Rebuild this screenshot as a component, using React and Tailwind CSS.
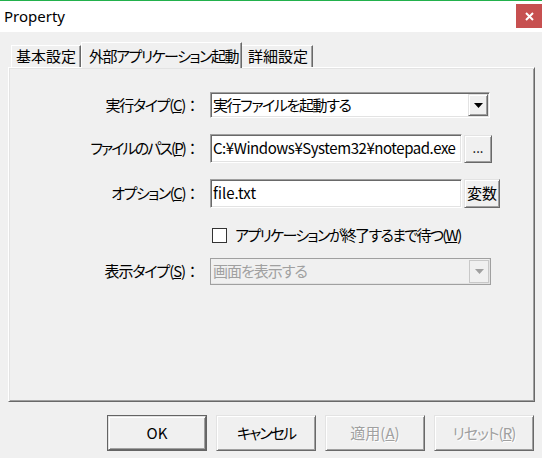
const raised =
  "border border-t-[#e3e3e3] border-l-[#e3e3e3] border-r-[#696969] border-b-[#696969] shadow-[inset_1px_1px_0_#ffffff,inset_-1px_-1px_0_#a0a0a0] bg-[#f0f0f0]";
const sunken =
  "border border-t-[#a0a0a0] border-l-[#a0a0a0] border-r-white border-b-white shadow-[inset_1px_1px_0_#696969,inset_-1px_-1px_0_#e3e3e3] bg-white";

const Label = ({ children, tight }) => (
  <div className="w-[190px] flex justify-end items-center text-[15px] text-black whitespace-nowrap">
    <span className={tight}>{children}</span>
    <span className="w-[15px] text-center [font-feature-settings:normal]">：</span>
  </div>
);

const Triangle = ({ color }) => (
  <svg width="9" height="5" viewBox="0 0 9 5">
    <polygon points="0,0 9,0 4.5,5" fill={color} />
  </svg>
);

const BottomButton = ({ children, primary, disabled, tight }) => (
  <div
    className={`w-[100px] h-[36px] ${
      primary ? "border border-[#646464]" : ""
    } flex`}
  >
    <div
      className={`flex-1 flex items-center justify-center text-[15px] whitespace-nowrap ${tight || ""} ${raised} ${
        disabled ? "text-[#a0a0a0] [text-shadow:1px_1px_0_#ffffff]" : "text-black"
      }`}
    >
      {children}
    </div>
  </div>
);

export default function App() {
  return (
    <div className="w-[542px] h-[458px] overflow-hidden bg-[#f0f0f0] font-['Noto_Sans_CJK_JP',sans-serif] [font-feature-settings:'palt'] text-black">
      {/* Title bar */}
      <div className="h-[32px] bg-white border-t border-[#22b14c] flex justify-between">
        <div className="pl-[4px] pt-[4px] text-[15px] font-['Noto_Sans',sans-serif]">
          Property
        </div>
        <div className="mt-[3px] w-[26px] h-[24px] bg-[#c75050] flex items-center justify-center">
          <svg width="9" height="9" viewBox="0 0 9 9">
            <path d="M1 1 L8 8 M8 1 L1 8" stroke="#fff" strokeWidth="2" />
          </svg>
        </div>
      </div>

      {/* Tabs */}
      <div className="px-[8px] pt-[10px]">
        <div className="flex items-end h-[25px] pl-[3px] relative z-10">
          <div className="w-[70px] h-[22px] border-l border-t border-white border-r border-r-[#696969] shadow-[inset_-1px_0_0_#a0a0a0] flex items-center pl-[4px] text-[15px] whitespace-nowrap">
            基本設定
          </div>
          <div className="w-[161px] h-[26px] -mb-[1px] bg-[#f0f0f0] border-l border-t border-white border-r border-r-[#696969] shadow-[inset_-1px_0_0_#a0a0a0] flex items-start pt-[2px] pl-[7px] text-[15px] tracking-[-1.5px] whitespace-nowrap">
            外部アプリケーション起動
          </div>
          <div className="w-[71px] h-[22px] border-t border-white border-r border-r-[#696969] shadow-[inset_-1px_0_0_#a0a0a0] flex items-center pl-[6px] text-[15px] whitespace-nowrap">
            詳細設定
          </div>
        </div>

        {/* Panel */}
        <div className="w-[527px] h-[335px] border border-t-white border-l-white border-r-[#696969] border-b-[#696969] shadow-[inset_1px_1px_0_#e3e3e3,inset_-1px_-1px_0_#a0a0a0] pl-[1px] pt-[24px]">
          {/* Row 1 */}
          <div className="flex items-center h-[26px]">
            <Label tight="tracking-[-1.3px]">
              実行タイプ(<span className="underline">C</span>)
            </Label>
            <div className={`ml-[10px] w-[280px] h-[26px] ${sunken} flex items-center justify-between pl-[2px] pr-[1px]`}>
              <span className="text-[15px] tracking-[-1.4px]">実行ファイルを起動する</span>
              <div className={`w-[20px] h-[22px] ${raised} flex items-center justify-center`}>
                <Triangle color="#000" />
              </div>
            </div>
          </div>

          {/* Row 2 */}
          <div className="flex items-center h-[29px] mt-[16px]">
            <Label tight="tracking-[-1.9px]">
              ファイルのパス(<span className="underline">P</span>)
            </Label>
            <div className={`ml-[10px] w-[252px] h-[29px] ${sunken} flex items-center pl-[2px] text-[15px] tracking-[-0.45px] overflow-hidden whitespace-nowrap`}>
              C:¥Windows¥System32¥notepad.exe
            </div>
            <div className={`ml-[2px] w-[28px] h-[28px] ${raised} flex items-center justify-center text-[13px] pb-[2px]`}>
              ...
            </div>
          </div>

          {/* Row 3 */}
          <div className="flex items-center h-[29px] mt-[16px]">
            <Label tight="tracking-[-1.5px]">
              オプション(<span className="underline">C</span>)
            </Label>
            <div className={`ml-[10px] w-[252px] h-[29px] ${sunken} flex items-center pl-[2px] text-[15px]`}>
              file.txt
            </div>
            <div className={`ml-[2px] w-[36px] h-[29px] ${raised} flex items-center justify-center text-[15px]`}>
              変数
            </div>
          </div>

          {/* Row 4 */}
          <div className="flex items-center h-[15px] mt-[20px]">
            <div className="ml-[202px] w-[15px] h-[15px] bg-white border border-[#333]" />
            <span className="ml-[8px] text-[15px] tracking-[-1.65px] whitespace-nowrap">
              アプリケーションが終了するまで待つ(<span className="underline">W</span>)
            </span>
          </div>

          {/* Row 5 */}
          <div className="flex items-center h-[27px] mt-[15px]">
            <Label tight="tracking-[-1.1px]">
              表示タイプ(<span className="underline">S</span>)
            </Label>
            <div className="ml-[10px] w-[281px] h-[27px] border border-[#a0a0a0] shadow-[inset_-1px_-1px_0_#e3e3e3] bg-[#f0f0f0] flex items-center justify-between pl-[2px] pr-[1px]">
              <span className="text-[15px] text-[#a0a0a0] tracking-[-1px]">画面を表示する</span>
              <div className="w-[20px] h-[23px] border border-[#c8c8c8] bg-[#f0f0f0] flex items-center justify-center">
                <Triangle color="#a0a0a0" />
              </div>
            </div>
          </div>
        </div>
      </div>

      {/* Bottom buttons */}
      <div className="flex justify-end gap-[9px] pr-[8px] mt-[13px]">
        <BottomButton primary>OK</BottomButton>
        <BottomButton tight="tracking-[-2px]">キャンセル</BottomButton>
        <BottomButton disabled>
          適用(<span className="underline">A</span>)
        </BottomButton>
        <BottomButton disabled tight="tracking-[-1px]">
          リセット(<span className="underline">R</span>)
        </BottomButton>
      </div>
    </div>
  );
}
